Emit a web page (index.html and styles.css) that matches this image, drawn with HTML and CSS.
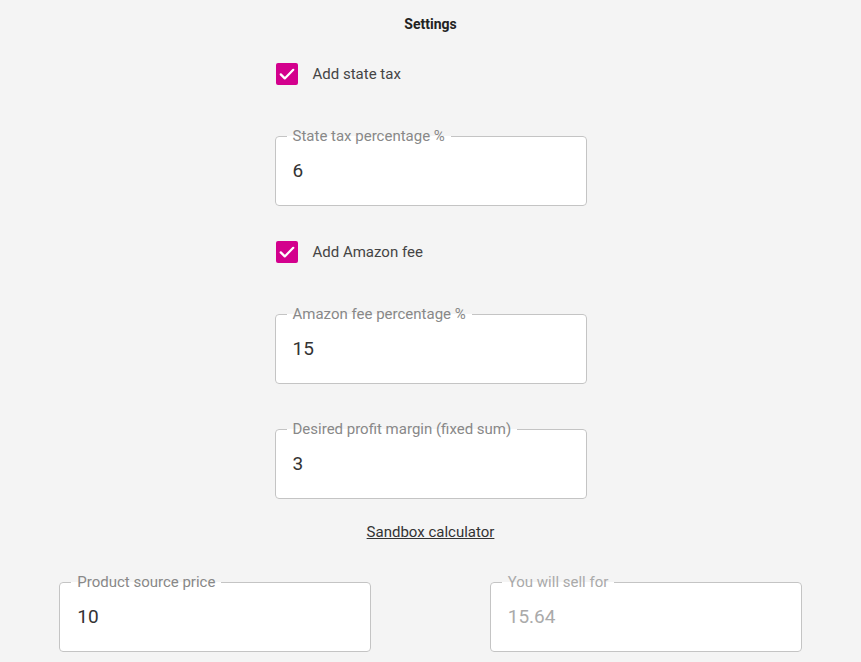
FILE: index.html
```html
<!DOCTYPE html>
<html lang="en">
<head>
  <meta charset="UTF-8" />
  <meta name="viewport" content="width=device-width, initial-scale=1.0"/>
  <title>Price Calculator</title>
  <link rel="stylesheet" href="styles.css">
</head>
<body>
  <div class="settings">
    <h2 class="title">Settings</h2>

    <label class="check-row">
      <span class="check-box">
        <svg viewBox="0 0 24 24" width="20" height="20"><path d="M4.5 12.5l4.8 4.8L19.5 7" fill="none" stroke="#fff" stroke-width="2.7" stroke-linecap="round" stroke-linejoin="round"/></svg>
      </span>
      <span class="check-label">Add state tax</span>
    </label>

    <fieldset class="field field-first">
      <legend>State tax percentage %</legend>
      <input type="text" value="6">
    </fieldset>

    <label class="check-row check-second">
      <span class="check-box">
        <svg viewBox="0 0 24 24" width="20" height="20"><path d="M4.5 12.5l4.8 4.8L19.5 7" fill="none" stroke="#fff" stroke-width="2.7" stroke-linecap="round" stroke-linejoin="round"/></svg>
      </span>
      <span class="check-label">Add Amazon fee</span>
    </label>

    <fieldset class="field field-first">
      <legend>Amazon fee percentage %</legend>
      <input type="text" value="15">
    </fieldset>

    <fieldset class="field field-next">
      <legend>Desired profit margin (fixed sum)</legend>
      <input type="text" value="3">
    </fieldset>

    <a class="sandbox-link" href="#">Sandbox calculator</a>
  </div>

  <div class="calc-row">
    <fieldset class="field">
      <legend>Product source price</legend>
      <input type="text" value="10">
    </fieldset>
    <fieldset class="field disabled">
      <legend>You will sell for</legend>
      <input type="text" value="15.64" disabled>
    </fieldset>
  </div>
</body>
</html>
```

FILE: styles.css
```css
body {
  margin: 0;
  background: #f4f4f4;
  font-family: Roboto, "Liberation Sans", sans-serif;
  color: #333;
}

.settings {
  width: 312px;
  margin: 0 auto;
  padding-top: 14px;
  display: flex;
  flex-direction: column;
}

.title {
  margin: 0;
  font-size: 14px;
  line-height: 20px;
  font-weight: 700;
  text-align: center;
  color: #222;
}

.check-row {
  display: flex;
  align-items: center;
  gap: 15px;
  margin-top: 29px;
  padding-left: 1px;
  cursor: pointer;
}

.check-second {
  margin-top: 35px;
}

.check-box {
  width: 22px;
  height: 22px;
  border-radius: 2px;
  background: #d3008d;
  display: flex;
  align-items: center;
  justify-content: center;
}

.check-label {
  font-size: 15px;
  color: #444;
}

.field {
  box-sizing: border-box;
  width: 312px;
  height: 78px;
  margin: 0;
  padding: 0 11px;
  border: 1px solid #c4c4c4;
  border-radius: 4px;
  background: #fff;
}

.field-first {
  margin-top: 43px;
}

.field-next {
  margin-top: 37px;
}

.field legend {
  padding: 0 6px;
  font-size: 15px;
  line-height: 16px;
  color: #888;
}

.field input {
  display: block;
  width: 100%;
  box-sizing: border-box;
  margin-top: 15px;
  padding: 0 6px;
  border: none;
  outline: none;
  background: transparent;
  font-family: inherit;
  font-size: 19px;
  line-height: 24px;
  color: #333;
}

.disabled legend,
.disabled input {
  color: #aaa;
}

.sandbox-link {
  align-self: center;
  margin-top: 23px;
  font-size: 15px;
  line-height: 20px;
  color: #333;
}

.calc-row {
  display: grid;
  grid-template-columns: 1fr 1fr;
  justify-items: center;
  margin-top: 32px;
}
```
